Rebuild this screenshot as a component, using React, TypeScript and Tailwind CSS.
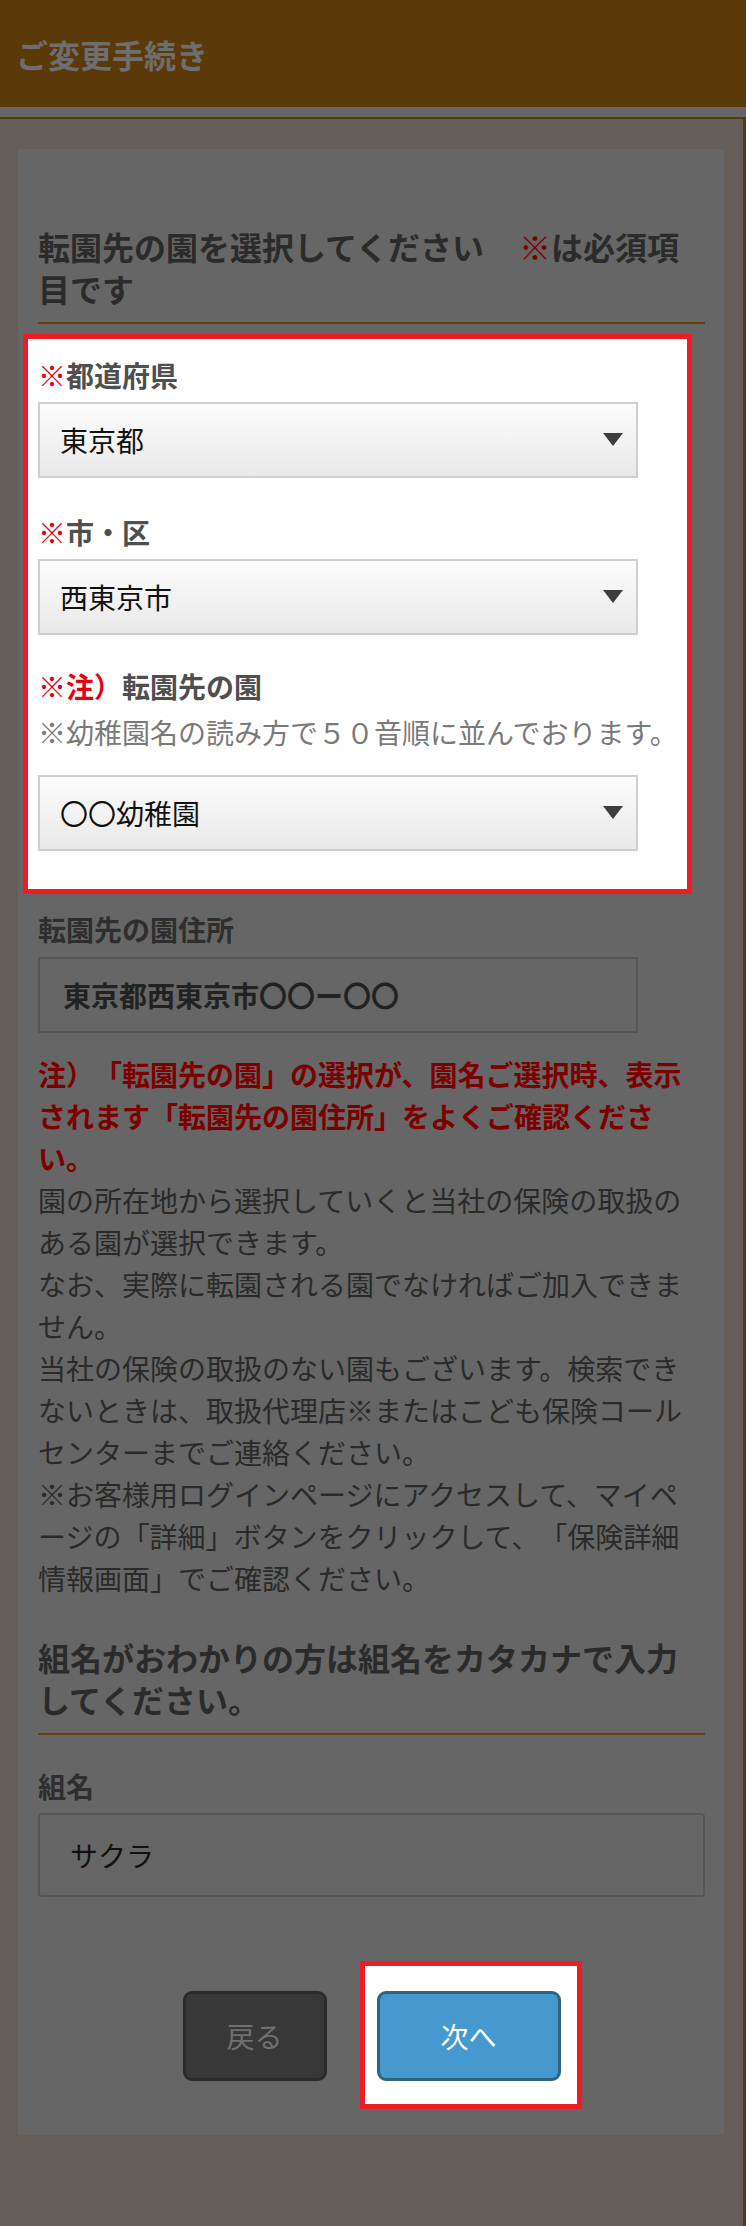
import React from "react";

type SelectProps = {
  value: string;
};

const Select = ({ value }: SelectProps) => {
  return (
    <div className="flex h-[76px] w-[600px] items-center justify-between border-2 border-[#cfcfcf] bg-gradient-to-b from-[#fcfcfc] to-[#e9e9e9] pl-[20px] pr-[13px]">
      <span className="text-[28px] leading-[42px] text-[#111111]">{value}</span>
      <svg width="20" height="13" viewBox="0 0 20 13" className="mb-[2px]">
        <polygon points="0,0 20,0 10,13" fill="#3d3d3d" />
      </svg>
    </div>
  );
};

const Label = ({ children }: { children: React.ReactNode }) => (
  <div className="text-[28px] font-bold leading-[42px] text-[#4f4f4f]">
    {children}
  </div>
);

export default function App() {
  return (
    <div className="min-h-[2226px] bg-[#666666] font-['Noto_Sans_CJK_JP','Noto_Sans',sans-serif] [text-spacing-trim:space-all]">
      <header className="flex h-[107px] items-center bg-[#5a3a08] px-[16px]">
        <h1 className="text-[32px] font-bold leading-[42px] text-[#6e6e6e]">
          ご変更手続き
        </h1>
      </header>

      <div className="mt-[10px] min-h-[2109px] border-t-2 border-r-[3px] border-[#5a3a08] bg-[#655d57] pt-[30px] pb-[91px]">
        <div className="ml-[18px] w-[706px] bg-[#666666] pt-[76px] pr-[19px] pb-[54px] pl-[20px]">
          <h2 className="text-[32px] font-bold leading-[42px] text-[#2b2b2b]">
            転園先の園を選択してください
            <span className="ml-[35px] text-[#7a0000]">※</span>
            は必須項目です
          </h2>
          <div className="mt-[13px] h-[2px] bg-[#64420f]" />

          {/* highlighted block */}
          <div className="mt-[10px] mr-[13px] ml-[-15px] border-[5px] border-[#ee1c25] bg-white pt-[15px] pb-[38px] pl-[10px]">
            <Label>
              <span className="text-[#e60012]">※</span>都道府県
            </Label>
            <div className="mt-[6px]">
              <Select value="東京都" />
            </div>

            <div className="mt-[33px]">
              <Label>
                <span className="text-[#e60012]">※</span>市・区
              </Label>
            </div>
            <div className="mt-[6px]">
              <Select value="西東京市" />
            </div>

            <div className="mt-[30px]">
              <Label>
                <span className="text-[#e60012]">※注）</span>転園先の園
              </Label>
            </div>
            <p className="mt-[4px] text-[28px] leading-[42px] text-[#7a7a7a]">
              ※幼稚園名の読み方で５０音順に並んでおります。
            </p>
            <div className="mt-[22px]">
              <Select value="〇〇幼稚園" />
            </div>
          </div>

          <div className="mt-[14px] text-[28px] font-bold leading-[42px] text-[#2e2e2e]">
            転園先の園住所
          </div>
          <div className="mt-[7px] flex h-[76px] w-[600px] items-center border-2 border-[#555555] pl-[23px]">
            <span className="text-[28px] font-bold leading-[42px] text-[#222222]">
              東京都西東京市〇〇ー〇〇
            </span>
          </div>

          <p className="mt-[20px] text-[28px] font-bold leading-[42px] text-[#7d0000]">
            注）「転園先の園」の選択が、園名ご選択時、表示されます「転園先の園住所」をよくご確認ください。
          </p>
          <div className="text-[28px] leading-[42px] text-[#2a2a2a]">
            <p>
              園の所在地から選択していくと当社の保険の取扱のある園が選択できます。
            </p>
            <p>なお、実際に転園される園でなければご加入できません。</p>
            <p>
              当社の保険の取扱のない園もございます。検索できないときは、取扱代理店※またはこども保険コールセンターまでご連絡ください。
            </p>
            <p>
              ※お客様用ログインページにアクセスして、マイページの「詳細」ボタンをクリックして、「保険詳細情報画面」でご確認ください。
            </p>
          </div>

          <h2 className="mt-[37px] text-[32px] font-bold leading-[42px] text-[#2b2b2b]">
            組名がおわかりの方は組名をカタカナで入力してください。
          </h2>
          <div className="mt-[13px] h-[2px] bg-[#64420f]" />

          <div className="mt-[30px] text-[28px] font-bold leading-[42px] text-[#2e2e2e]">
            組名
          </div>
          <div className="mt-[6px] flex h-[84px] w-full items-center rounded-[4px] border-2 border-[#555555] pl-[30px]">
            <span className="text-[28px] leading-[42px] text-[#111111]">
              サクラ
            </span>
          </div>

          <div className="mt-[94px] flex justify-center gap-[50px]">
            <button className="h-[90px] w-[144px] rounded-[9px] border-[3px] border-[#2a2a2a] bg-[#383838] text-[28px] text-[#707070]">
              戻る
            </button>
            <div className="relative">
              <div className="absolute -top-[30px] -right-[21px] -bottom-[28px] -left-[17px] border-[5px] border-[#ee1c25] bg-white" />
              <button className="relative h-[90px] w-[184px] rounded-[9px] border-[3px] border-[#2e6384] bg-[#4699cf] text-[28px] text-white">
                次へ
              </button>
            </div>
          </div>
        </div>
      </div>
    </div>
  );
}
